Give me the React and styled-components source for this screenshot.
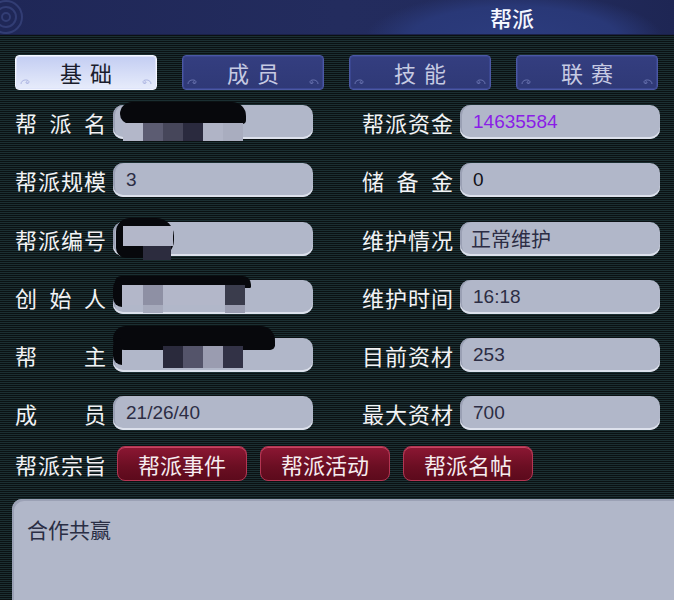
import styled, { createGlobalStyle } from 'styled-components';

const GlobalStyle = createGlobalStyle`
  html, body {
    margin: 0;
    padding: 0;
    background: #0f1719;
  }
  body {
    font-family: "Noto Sans CJK SC", "Noto Sans", sans-serif;
    overflow: hidden;
  }
`;

const leftRows = [
  { label: '帮派名', value: '', redact: 'name' },
  { label: '帮派规模', value: '3' },
  { label: '帮派编号', value: '', redact: 'id' },
  { label: '创始人', value: '', redact: 'founder' },
  { label: '帮主', value: '', redact: 'leader' },
  { label: '成员', value: '21/26/40' },
];

const rightRows = [
  { label: '帮派资金', value: '14635584', accent: true },
  { label: '储备金', value: '0', dark: true },
  { label: '维护情况', value: '正常维护', cjk: true },
  { label: '维护时间', value: '16:18' },
  { label: '目前资材', value: '253' },
  { label: '最大资材', value: '700' },
];

const redactions = {
  name: {
    blob: { left: 7, top: -3, width: 126, height: 22, radius: '12px 14px 4px 10px' },
    cells: [
      { left: 10, top: 18, color: '#b3b7c9' },
      { left: 30, top: 18, color: '#5c5c72' },
      { left: 50, top: 18, color: '#46465a' },
      { left: 70, top: 18, color: '#2a2a3e' },
      { left: 90, top: 18, color: '#b0b4c6' },
      { left: 110, top: 18, color: '#a9adbf' },
    ],
  },
  id: {
    blob: { left: 3, top: -4, width: 58, height: 40, radius: '14px 18px 18px 10px' },
    cells: [
      { left: 10, top: 4, color: '#b3b7c9', width: 50, height: 20 },
      { left: 30, top: 24, color: '#2c2c3e', width: 28, height: 14 },
    ],
  },
  founder: {
    blob: { left: 2, top: -4, width: 136, height: 12, radius: '10px 14px 2px 10px' },
    edge: true,
    cells: [
      { left: 9, top: 5, color: '#b3b7c9', width: 120, height: 20 },
      { left: 30, top: 5, color: '#8e90a4', height: 20 },
      { left: 112, top: 5, color: '#3a3c4c', height: 20 },
      { left: 30, top: 25, color: '#a6aabc', height: 8 },
      { left: 112, top: 25, color: '#9a9db0', height: 8 },
    ],
  },
  leader: {
    blob: { left: 0, top: -12, width: 162, height: 24, radius: '16px 18px 6px 14px' },
    edge: true,
    cells: [
      { left: 50, top: 8, color: '#2a2a3c', height: 22 },
      { left: 70, top: 8, color: '#54546a', height: 22 },
      { left: 90, top: 8, color: '#9a9cb0', height: 22 },
      { left: 110, top: 8, color: '#323246', height: 22 },
    ],
  },
};

const tabs = ['基础', '成员', '技能', '联赛'];
const actions = ['帮派事件', '帮派活动', '帮派名帖'];

const Swirl = ({ flip }) => (
  <SwirlIcon viewBox="0 0 12 12" $flip={flip}>
    <path
      d="M2 10 C2 5 10 5 10 8 C10 10 7 10 7 8.5 C7 7.5 8.5 7.5 8.5 8.3"
      fill="none"
      stroke="currentColor"
      strokeWidth="1"
    />
  </SwirlIcon>
);

const Redact = ({ kind }) => {
  const r = redactions[kind];
  return (
    <>
      <Blob
        style={{
          left: r.blob.left,
          top: r.blob.top,
          width: r.blob.width,
          height: r.blob.height,
          borderRadius: r.blob.radius,
        }}
      />
      {r.edge && <Edge />}
      {r.cells.map((c, i) => (
        <Cell
          key={i}
          style={{
            left: c.left,
            top: c.top,
            width: c.width || 20,
            height: c.height || 18,
            background: c.color,
          }}
        />
      ))}
    </>
  );
};

const InfoRow = ({ row }) => (
  <Row>
    <Label>{row.label}</Label>
    <Field $accent={row.accent} $dark={row.dark} $cjk={row.cjk}>
      {row.value}
      {row.redact && <Redact kind={row.redact} />}
    </Field>
  </Row>
);

const App = () => (
  <Page>
    <GlobalStyle />
    <Header>
      <HeaderSwirl viewBox="0 0 40 40">
        <circle cx="6" cy="20" r="16" fill="none" stroke="#323d74" strokeWidth="2" />
        <circle cx="6" cy="20" r="10" fill="none" stroke="#323d74" strokeWidth="2" />
        <circle cx="6" cy="20" r="4" fill="none" stroke="#323d74" strokeWidth="2" />
      </HeaderSwirl>
      <Title>帮派</Title>
    </Header>

    <Tabs>
      {tabs.map((t, i) => (
        <Tab key={t} $active={i === 0}>
          <Swirl />
          {t}
          <Swirl flip />
        </Tab>
      ))}
    </Tabs>

    <InfoGrid>
      <Column>
        {leftRows.map((r) => (
          <InfoRow key={r.label} row={r} />
        ))}
      </Column>
      <Column>
        {rightRows.map((r) => (
          <InfoRow key={r.label} row={r} />
        ))}
      </Column>
    </InfoGrid>

    <PurposeRow>
      <Label>帮派宗旨</Label>
      <Actions>
        {actions.map((a) => (
          <RedButton key={a}>{a}</RedButton>
        ))}
      </Actions>
    </PurposeRow>

    <Purpose>合作共赢</Purpose>
  </Page>
);

export default App;

const Page = styled.div`
  width: 674px;
  height: 600px;
  overflow: hidden;
  background: repeating-linear-gradient(
    to bottom,
    #1b2f32 0px,
    #1b2f32 1px,
    #0b1113 1px,
    #0b1113 2px
  );
`;

const Header = styled.div`
  position: relative;
  height: 34px;
  display: flex;
  align-items: center;
  justify-content: flex-end;
  padding-right: 140px;
  background:
    radial-gradient(ellipse 150px 48px at 514px 40px, #2c3c7e 0%, #293877 70%, rgba(38, 50, 108, 0) 100%),
    linear-gradient(to right, #1f2757, #232c5e 50%, #222b5c 80%, #1e2654);
  border-bottom: 1px solid #1a2148;
`;

const HeaderSwirl = styled.svg`
  position: absolute;
  left: 0;
  top: -3px;
  width: 40px;
  height: 40px;
`;

const Title = styled.div`
  color: #f4f6ff;
  font-size: 22px;
  font-weight: 500;
  line-height: 1;
`;

const Tabs = styled.div`
  display: grid;
  grid-template-columns: repeat(4, 142px);
  column-gap: 25px;
  padding: 20px 0 0 15px;
`;

const Tab = styled.div`
  position: relative;
  height: 35px;
  box-sizing: border-box;
  display: flex;
  align-items: center;
  justify-content: center;
  padding: 0 0 2px 8px;
  border-radius: 4px;
  font-size: 22px;
  line-height: 1;
  letter-spacing: 8px;
  border: 1.5px solid ${(p) => (p.$active ? '#f4f6ff' : '#4c58a4')};
  color: ${(p) => (p.$active ? '#1a1c2c' : '#c6cae2')};
  background: ${(p) =>
    p.$active
      ? 'linear-gradient(to bottom, #c3cdf2, #e7ecfb)'
      : 'linear-gradient(to bottom, #343e80, #2f3976)'};
  box-shadow: inset 0 0 0 1px ${(p) => (p.$active ? '#dfe5fb' : '#3a4690')};
`;

const SwirlIcon = styled.svg`
  position: absolute;
  bottom: 3px;
  ${(p) => (p.$flip ? 'right: 3px; transform: scaleX(-1);' : 'left: 3px;')}
  width: 12px;
  height: 12px;
  color: rgba(140, 150, 210, 0.6);
`;

const InfoGrid = styled.div`
  display: grid;
  grid-template-columns: 298px 300px;
  column-gap: 49px;
  padding: 15px 0 0 15px;
`;

const Column = styled.div`
  display: flex;
  flex-direction: column;
  gap: 24.3px;
`;

const Row = styled.div`
  display: flex;
  align-items: center;
  gap: 7px;
`;

const Label = styled.div`
  width: 91px;
  flex: none;
  color: #f2f3f5;
  font-size: 22px;
  line-height: 1;
  text-align: justify;
  text-align-last: justify;
`;

const Field = styled.div`
  position: relative;
  width: 200px;
  height: 34px;
  box-sizing: border-box;
  display: flex;
  align-items: center;
  padding-left: ${(p) => (p.$cjk ? '11px' : '13px')};
  border-radius: 10px;
  background: #b1b7c9;
  box-shadow: inset 0 -2px 0 #dde1ec, inset 2px 0 0 #9aa0b4;
  font-family: ${(p) =>
    p.$cjk ? '"Noto Sans CJK SC", sans-serif' : '"Liberation Sans", Arial, sans-serif'};
  font-size: ${(p) => (p.$cjk ? '20px' : '19px')};
  color: ${(p) => (p.$accent ? '#8a1de6' : p.$dark ? '#111118' : '#2c2d44')};
`;

const Blob = styled.div`
  position: absolute;
  background: #07080c;
  filter: blur(0.6px);
`;

const Cell = styled.div`
  position: absolute;
`;

const Edge = styled.div`
  position: absolute;
  left: 0;
  top: 0;
  width: 9px;
  height: 27px;
  background: #07080c;
  border-radius: 10px 0 0 12px;
`;

const PurposeRow = styled.div`
  display: flex;
  align-items: center;
  gap: 11px;
  padding: 16px 0 0 15px;
`;

const Actions = styled.div`
  display: flex;
  gap: 13px;
`;

const RedButton = styled.div`
  width: 130px;
  height: 35px;
  box-sizing: border-box;
  display: flex;
  align-items: center;
  justify-content: center;
  border-radius: 8px;
  border: 1.5px solid #b33552;
  background: linear-gradient(to bottom, #8c1733, #6a0e22 60%, #5c0a1c);
  box-shadow: inset 0 1px 0 #c44562;
  color: #f6ecef;
  font-size: 22px;
  line-height: 1;
`;

const Purpose = styled.div`
  margin: 18px 0 0 12px;
  width: 700px;
  height: 130px;
  box-sizing: border-box;
  padding: 17px 0 0 15px;
  border-radius: 10px 0 0 0;
  background: #b1b7c9;
  box-shadow: inset 2px 2px 0 #9ba1b5;
  color: #2a2e44;
  font-size: 21px;
  line-height: 1.3;
`;
